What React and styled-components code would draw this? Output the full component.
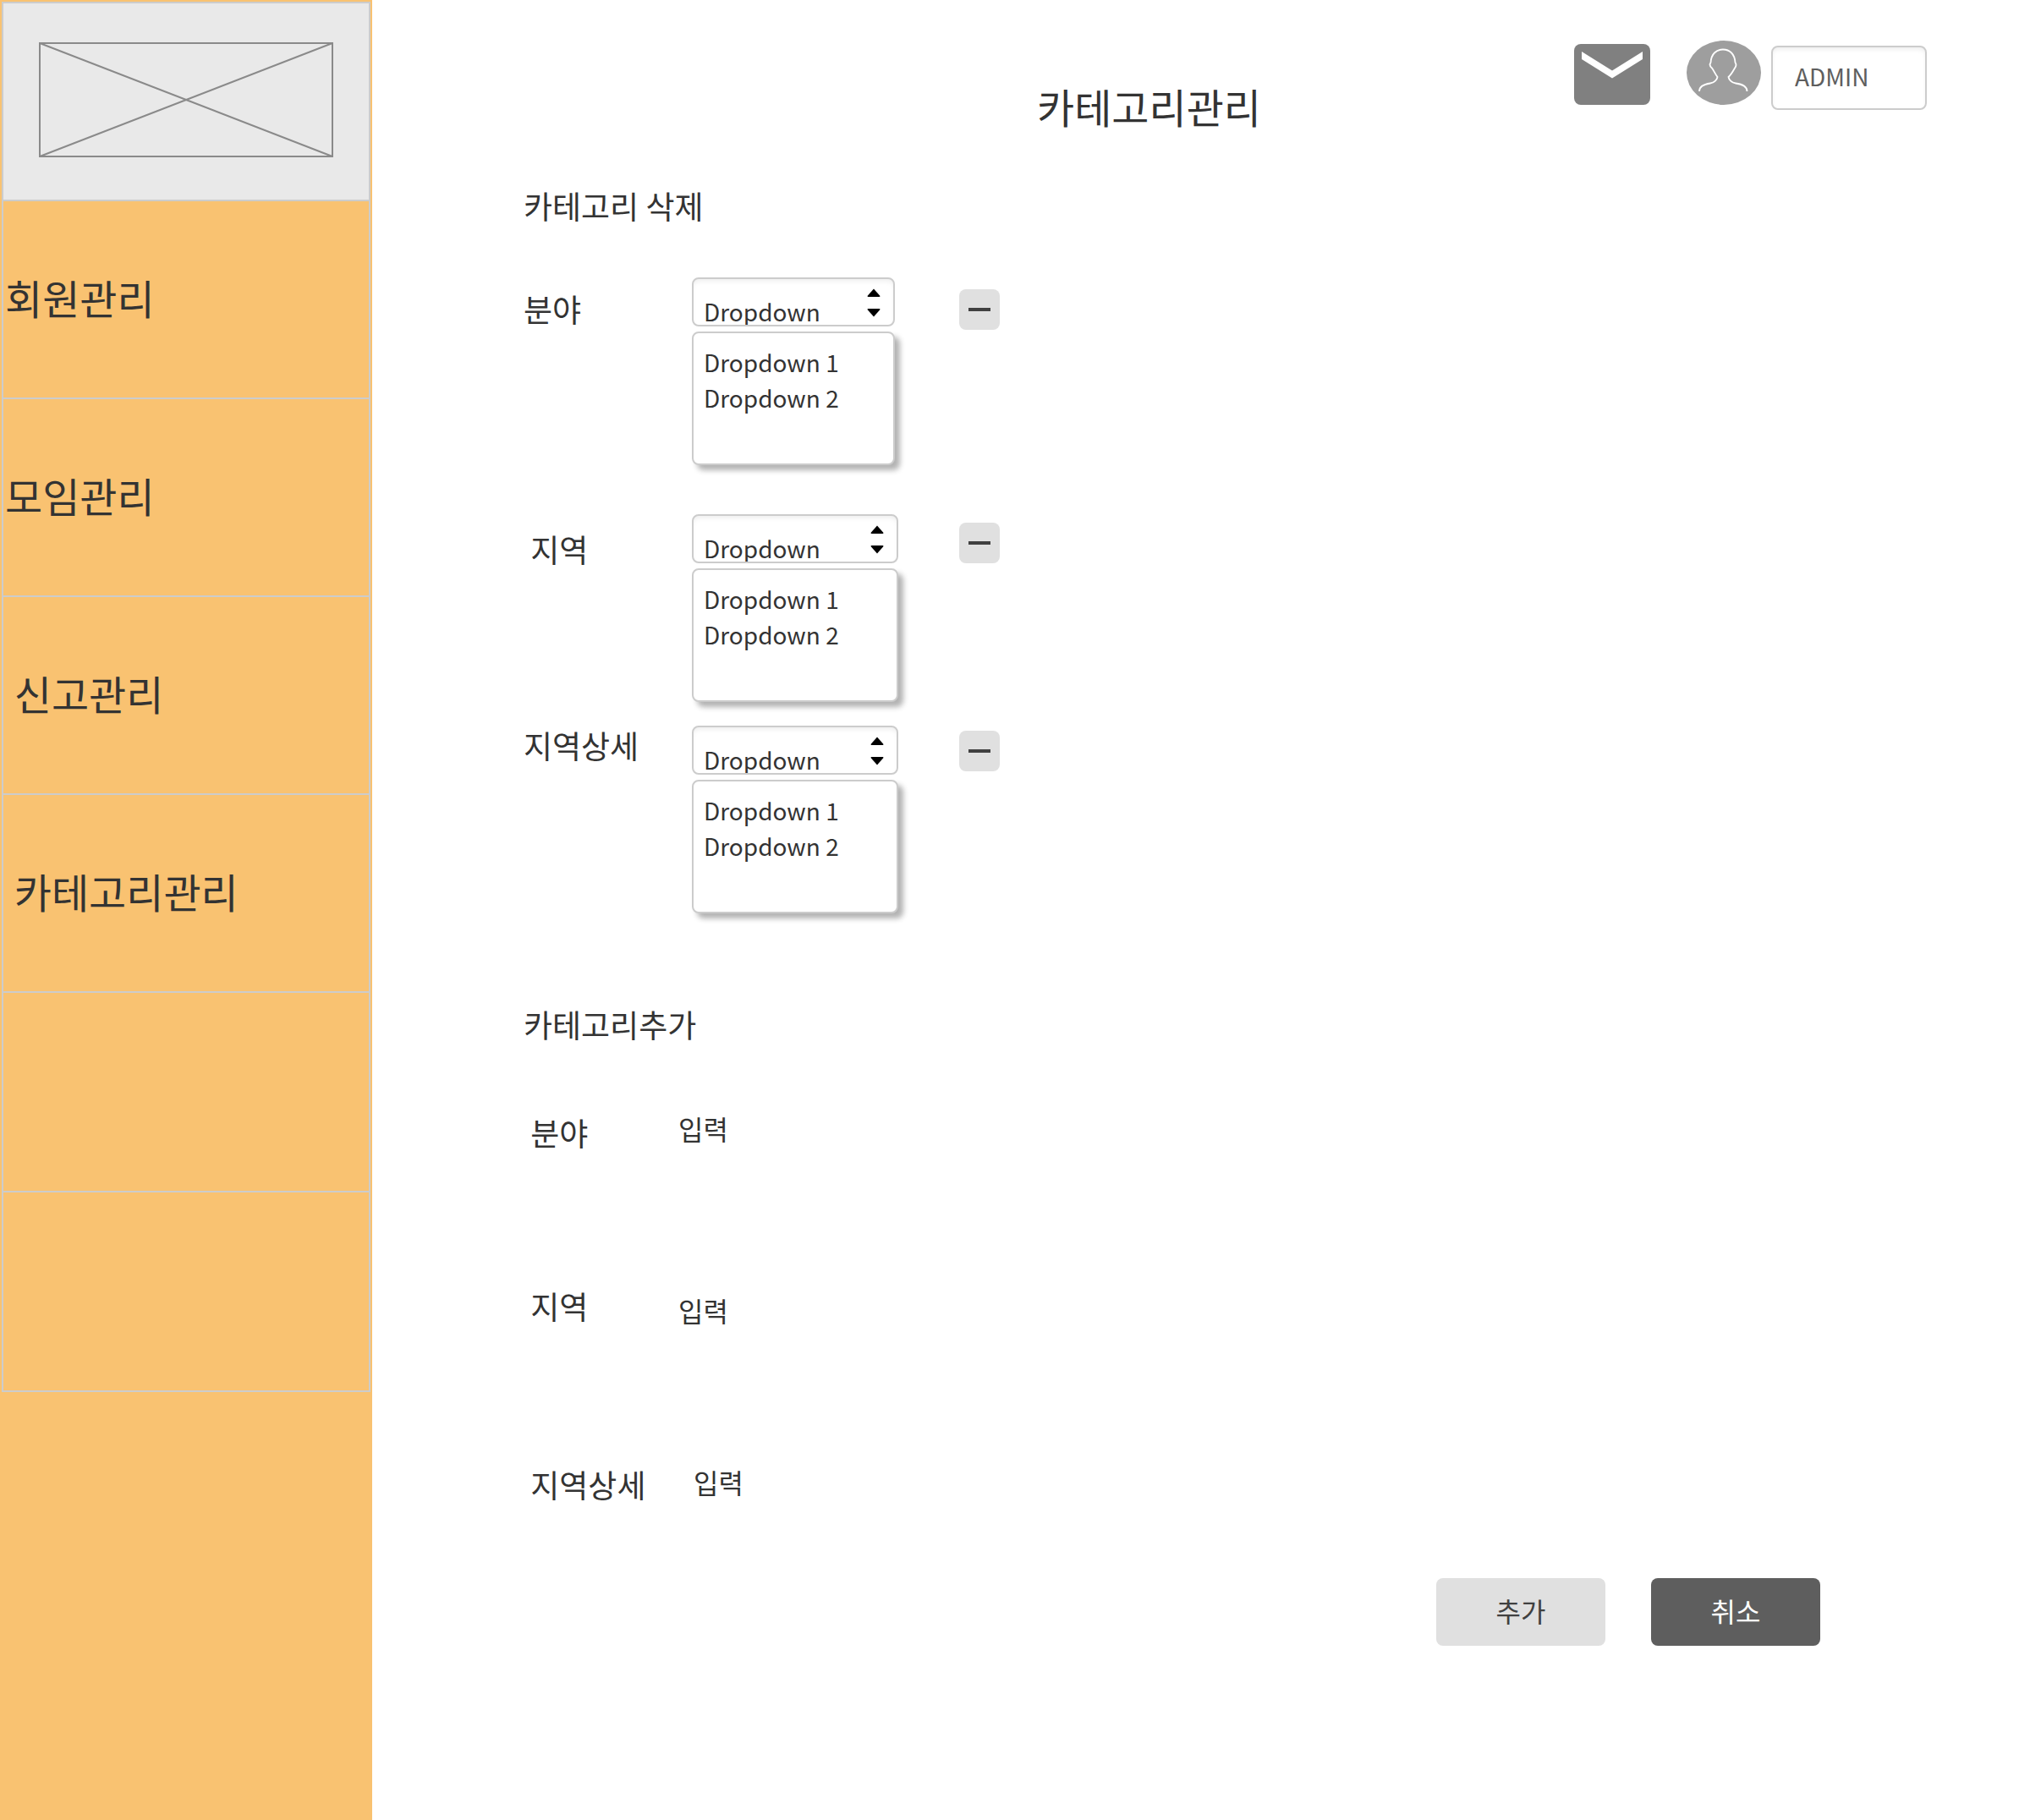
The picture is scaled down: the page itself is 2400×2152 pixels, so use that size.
import React from "react";
import styled, { createGlobalStyle } from "styled-components";

const line = "#cccccc";
const ink = "#333333";

const GlobalStyle = createGlobalStyle`
  *, *::before, *::after { box-sizing: border-box; }
  body {
    margin: 0;
    background: #ffffff;
    color: ${ink};
    font-family: "Noto Sans CJK KR", "Noto Sans", sans-serif;
  }
  h1, h2, ul { margin: 0; padding: 0; font-weight: 400; }
  ul { list-style: none; }
  button, input, select { font: inherit; color: inherit; margin: 0; }
`;

const Layout = styled.div`
  display: flex;
  min-height: 100vh;
`;

const Sidebar = styled.nav`
  flex: 0 0 440px;
  padding: 2px;
  background: #f9c271;
`;

const LogoCell = styled.div`
  display: flex;
  align-items: center;
  justify-content: center;
  height: 236px;
  padding-bottom: 4px;
  border: 2px solid ${line};
  background: #e9e9e9;
`;

const MenuList = styled.ul`
  border: solid ${line};
  border-width: 0 2px;
`;

const MenuItem = styled.li`
  height: ${(p) => (p.$empty ? 236 : 234)}px;
  border-bottom: 2px solid ${line};
`;

const MenuLink = styled.a`
  display: flex;
  align-items: center;
  height: 100%;
  padding: 0 2px 6px;
  color: ${ink};
  font-size: 48px;
  line-height: 72px;
  text-decoration: none;
  white-space: pre;
`;

const Main = styled.main`
  flex: 1;
  min-width: 0;
  padding: 48px 122px 48px 179px;
`;

const Header = styled.header`
  display: flex;
  justify-content: flex-end;
  align-items: flex-start;
  height: 170px;
`;

const Title = styled.h1`
  margin-right: 370px;
  padding-top: 41px;
  font-size: 48px;
  line-height: 72px;
  white-space: nowrap;
`;

const IconButton = styled.button`
  display: block;
  padding: 0;
  border: 0;
  background: none;
  margin: ${(p) => p.$margin};
`;

const AdminInput = styled.input`
  width: 184px;
  height: 76px;
  margin-top: 6px;
  padding: 0 16px 4px 26px;
  border: 2px solid ${line};
  border-radius: 8px;
  background: #ffffff;
  box-shadow: inset 0 4px 6px -2px rgba(0, 0, 0, 0.08);
  color: #5e5e5e;
  font-size: 28px;
`;

const SectionTitle = styled.h2`
  padding-top: 2px;
  font-size: 37px;
  line-height: 46px;
  white-space: pre;
`;

const DeleteList = styled.div`
  display: flex;
  flex-direction: column;
  padding: 62px 0 106px;
`;

const DeleteRow = styled.div`
  display: grid;
  grid-template-columns: 199px 316px 48px;
  align-items: start;
  margin-bottom: ${(p) => p.$after}px;
`;

const Label = styled.label`
  padding-top: ${(p) => p.$top}px;
  font-size: 37px;
  line-height: 46px;
  white-space: pre;
`;

const Dropdown = styled.div`
  display: flex;
  flex-direction: column;
  gap: 6px;
  width: ${(p) => p.$width}px;
`;

const SelectWrap = styled.div`
  position: relative;
`;

const Select = styled.select`
  display: block;
  appearance: none;
  width: 100%;
  height: 58px;
  padding: 18px 40px 0 12px;
  border: 2px solid ${line};
  border-radius: 8px;
  background: #ffffff;
  box-shadow: inset 0 4px 6px -2px rgba(0, 0, 0, 0.08);
  font-size: 28px;
`;

const Carets = styled.svg`
  position: absolute;
  top: 13px;
  right: 17px;
  pointer-events: none;
`;

const OptionList = styled.ul`
  height: 158px;
  padding: 13px 12px;
  border: 2px solid ${line};
  border-radius: 8px;
  background: #ffffff;
  box-shadow: 6px 6px 6px rgba(0, 0, 0, 0.3);
`;

const Option = styled.li`
  font-size: 28px;
  line-height: 42px;
`;

const RemoveButton = styled.button`
  display: flex;
  align-items: center;
  justify-content: center;
  width: 48px;
  height: 48px;
  margin-top: ${(p) => p.$top}px;
  padding: 0;
  border: 0;
  border-radius: 8px;
  background: #e0e0e0;
`;

const AddList = styled.div`
  padding-top: 78px;
`;

const AddRow = styled.div`
  display: grid;
  grid-template-columns: ${(p) => p.$labelWidth}px 320px;
  align-items: start;
  height: 209px;

  &:last-child {
    height: 136px;
  }
`;

const TextInput = styled.input`
  width: 100%;
  height: 44px;
  margin-top: ${(p) => p.$top}px;
  padding: 0;
  border: 0;
  background: transparent;
  font-size: 32px;
`;

const Actions = styled.div`
  display: flex;
  justify-content: flex-end;
  gap: 54px;
  padding-right: 126px;
`;

const ActionButton = styled.button`
  width: 200px;
  height: 80px;
  padding: 0 0 4px;
  border: 0;
  border-radius: 8px;
  background: ${(p) => (p.$dark ? "#5e5e5e" : "#e0e0e0")};
  color: ${(p) => (p.$dark ? "#ffffff" : "#404040")};
  font-size: 32px;
`;

const menu = ["회원관리", "모임관리", " 신고관리", " 카테고리관리", "", ""];

const deleteRows = [
  { id: "del-field", label: "분야", labelTop: 14, buttonTop: 14, width: 240, after: 58 },
  { id: "del-area", label: " 지역", labelTop: 18, buttonTop: 10, width: 244, after: 28 },
  { id: "del-detail", label: "지역상세", labelTop: 0, buttonTop: 6, width: 244, after: 0 },
];

const addRows = [
  { id: "add-field", label: " 분야", labelTop: 4, inputTop: 0, labelWidth: 183 },
  { id: "add-area", label: " 지역", labelTop: 0, inputTop: 6, labelWidth: 183 },
  { id: "add-detail", label: " 지역상세", labelTop: 2, inputTop: 0, labelWidth: 201 },
];

const options = ["Dropdown 1", "Dropdown 2"];

function LogoPlaceholder() {
  return (
    <svg width="348" height="136" viewBox="0 0 348 136" fill="none" stroke="#8a8a8a" strokeWidth="2" role="img" aria-label="logo">
      <rect x="1" y="1" width="346" height="134" />
      <path d="M1 1L347 135M347 1L1 135" />
    </svg>
  );
}

function MailIcon() {
  return (
    <svg width="90" height="72" viewBox="0 0 90 72">
      <rect width="90" height="72" rx="8" fill="#808080" />
      <path d="M9 9L45 31.500L81 9V18L45 40.500L9 18Z" fill="#ffffff" />
    </svg>
  );
}

function AvatarIcon() {
  return (
    <svg width="88" height="76" viewBox="0 0 88 76">
      <ellipse cx="44" cy="38" rx="44" ry="38" fill="#9e9e9e" />
      <path
        d="M15 60C15 54 21 51.500 28 50.500C33 50 36 46 36.500 43C34 40 32 35 30 32.500C27.500 30.500 27 28 28.500 26C29 16 35 10.500 43 10.500C51 10.500 57 16 57.500 26C59 28 58.500 30.500 57 32.500C55 36 52 41 49.500 43C50 46 53 50 58 50.500C66 51.500 71.500 54 71.500 60"
        fill="none"
        stroke="#ffffff"
        strokeWidth="1.800"
      />
    </svg>
  );
}

function DropdownField({ id, width }) {
  return (
    <Dropdown $width={width}>
      <SelectWrap>
        <Select id={id} defaultValue="Dropdown">
          <option>Dropdown</option>
          {options.map((o) => (
            <option key={o}>{o}</option>
          ))}
        </Select>
        <Carets width="16" height="34" viewBox="0 0 16 34" aria-hidden="true">
          <path d="M8 0.500L15.500 9Q15.500 10 14.500 10H1.500Q0.500 10 0.500 9Z" />
          <path d="M8 33.500L15.500 25Q15.500 24 14.500 24H1.500Q0.500 24 0.500 25Z" />
        </Carets>
      </SelectWrap>
      <OptionList>
        {options.map((o) => (
          <Option key={o}>{o}</Option>
        ))}
      </OptionList>
    </Dropdown>
  );
}

export default function App() {
  return (
    <>
      <GlobalStyle />
      <Layout>
        <Sidebar>
          <LogoCell>
            <LogoPlaceholder />
          </LogoCell>
          <MenuList>
            {menu.map((text, i) => (
              <MenuItem key={i} $empty={!text}>
                {text && <MenuLink href="#">{text}</MenuLink>}
              </MenuItem>
            ))}
          </MenuList>
        </Sidebar>
        <Main>
          <Header>
            <Title>카테고리관리</Title>
            <IconButton $margin="4px 43px 0 0" aria-label="메일">
              <MailIcon />
            </IconButton>
            <IconButton $margin="0 12px 0 0" aria-label="프로필">
              <AvatarIcon />
            </IconButton>
            <AdminInput aria-label="관리자" defaultValue="ADMIN" />
          </Header>
          <section>
            <SectionTitle>카테고리 삭제</SectionTitle>
            <DeleteList>
              {deleteRows.map((r) => (
                <DeleteRow key={r.id} $after={r.after}>
                  <Label htmlFor={r.id} $top={r.labelTop}>{r.label}</Label>
                  <DropdownField id={r.id} width={r.width} />
                  <RemoveButton $top={r.buttonTop} aria-label="삭제">
                    <svg width="26" height="4" viewBox="0 0 26 4">
                      <rect width="26" height="4" fill="#404040" />
                    </svg>
                  </RemoveButton>
                </DeleteRow>
              ))}
            </DeleteList>
          </section>
          <section>
            <SectionTitle>카테고리추가</SectionTitle>
            <AddList>
              {addRows.map((r) => (
                <AddRow key={r.id} $labelWidth={r.labelWidth}>
                  <Label htmlFor={r.id} $top={r.labelTop}>{r.label}</Label>
                  <TextInput id={r.id} defaultValue="입력" $top={r.inputTop} />
                </AddRow>
              ))}
            </AddList>
            <Actions>
              <ActionButton>추가</ActionButton>
              <ActionButton $dark>취소</ActionButton>
            </Actions>
          </section>
        </Main>
      </Layout>
    </>
  );
}
